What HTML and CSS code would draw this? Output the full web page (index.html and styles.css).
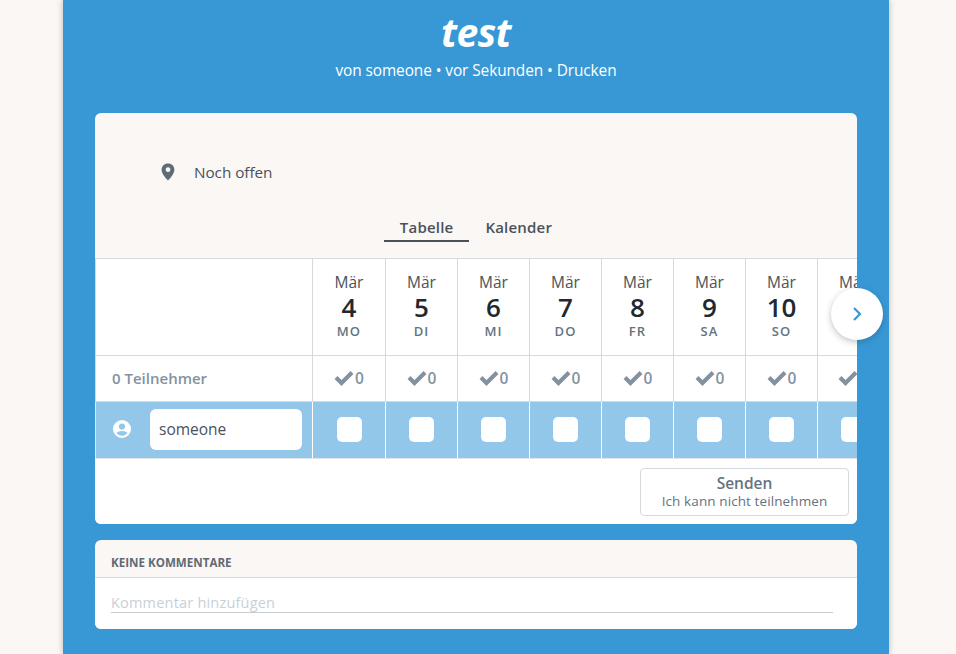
FILE: index.html
```html
<!DOCTYPE html>
<html lang="de">
<head>
<meta charset="utf-8">
<title>test</title>
<link rel="stylesheet" href="styles.css">
</head>
<body>
<main class="sheet">
  <header class="head">
    <h1 class="title">test</h1>
    <p class="meta">von someone • vor Sekunden • Drucken</p>
  </header>
  <section class="card">
    <div class="location">
      <svg class="pin" viewBox="0 0 14 18" width="14" height="18"><path fill="#5f6b76" d="M7 .5C3.300.5.6 3.200.6 6.800c0 3.600 3.600 8 6.400 10.700 2.800-2.700 6.400-7.100 6.400-10.700C13.400 3.200 10.700.5 7 .5zm0 8.600a2.400 2.400 0 1 1 0-4.800 2.400 2.400 0 0 1 0 4.800z"/></svg>
      <span>Noch offen</span>
    </div>
    <nav class="tabs">
      <span class="tab active">Tabelle</span>
      <span class="tab">Kalender</span>
    </nav>
    <div class="poll">
      <div class="row row-head">
        <div class="lead"></div>
        <div class="day"><span class="mon">Mär</span><span class="num">4</span><span class="dow">MO</span></div>
        <div class="day"><span class="mon">Mär</span><span class="num">5</span><span class="dow">DI</span></div>
        <div class="day"><span class="mon">Mär</span><span class="num">6</span><span class="dow">MI</span></div>
        <div class="day"><span class="mon">Mär</span><span class="num">7</span><span class="dow">DO</span></div>
        <div class="day"><span class="mon">Mär</span><span class="num">8</span><span class="dow">FR</span></div>
        <div class="day"><span class="mon">Mär</span><span class="num">9</span><span class="dow">SA</span></div>
        <div class="day"><span class="mon">Mär</span><span class="num">10</span><span class="dow">SO</span></div>
        <div class="day"><span class="mon">Mär</span></div>
      </div>
      <div class="row row-count">
        <div class="lead">0 Teilnehmer</div>
        <div class="tally"><svg class="check" viewBox="0 0 20 16" width="20" height="16"><path d="M2 7.500 7.500 13 18 2.500" fill="none" stroke="#84929f" stroke-width="4.200"/></svg><span>0</span></div>
        <div class="tally"><svg class="check" viewBox="0 0 20 16" width="20" height="16"><path d="M2 7.500 7.500 13 18 2.500" fill="none" stroke="#84929f" stroke-width="4.200"/></svg><span>0</span></div>
        <div class="tally"><svg class="check" viewBox="0 0 20 16" width="20" height="16"><path d="M2 7.500 7.500 13 18 2.500" fill="none" stroke="#84929f" stroke-width="4.200"/></svg><span>0</span></div>
        <div class="tally"><svg class="check" viewBox="0 0 20 16" width="20" height="16"><path d="M2 7.500 7.500 13 18 2.500" fill="none" stroke="#84929f" stroke-width="4.200"/></svg><span>0</span></div>
        <div class="tally"><svg class="check" viewBox="0 0 20 16" width="20" height="16"><path d="M2 7.500 7.500 13 18 2.500" fill="none" stroke="#84929f" stroke-width="4.200"/></svg><span>0</span></div>
        <div class="tally"><svg class="check" viewBox="0 0 20 16" width="20" height="16"><path d="M2 7.500 7.500 13 18 2.500" fill="none" stroke="#84929f" stroke-width="4.200"/></svg><span>0</span></div>
        <div class="tally"><svg class="check" viewBox="0 0 20 16" width="20" height="16"><path d="M2 7.500 7.500 13 18 2.500" fill="none" stroke="#84929f" stroke-width="4.200"/></svg><span>0</span></div>
        <div class="tally tally-cut"><svg class="check" viewBox="0 0 20 16" width="20" height="16"><path d="M2 7.500 7.500 13 18 2.500" fill="none" stroke="#84929f" stroke-width="4.200"/></svg></div>
      </div>
      <div class="row row-entry">
        <div class="lead">
          <svg class="user" viewBox="0 0 18 18" width="18" height="18"><path fill="#fff" fill-rule="evenodd" d="M9 0a9 9 0 1 0 0 18A9 9 0 0 0 9 0zm0 3.400a3.100 3.100 0 1 1 0 6.200 3.100 3.100 0 0 1 0-6.200zM9 15.800c-2.300 0-4.300-1.100-5.500-2.700.9-1.300 3.100-2 5.500-2s4.600.7 5.500 2c-1.200 1.600-3.200 2.700-5.500 2.700z"/></svg>
          <div class="name">someone</div>
        </div>
        <div class="pick"><span class="box"></span></div>
        <div class="pick"><span class="box"></span></div>
        <div class="pick"><span class="box"></span></div>
        <div class="pick"><span class="box"></span></div>
        <div class="pick"><span class="box"></span></div>
        <div class="pick"><span class="box"></span></div>
        <div class="pick"><span class="box"></span></div>
        <div class="pick"><span class="box"></span></div>
      </div>
    </div>
    <div class="actions">
      <button class="send" type="button"><strong>Senden</strong><span>Ich kann nicht teilnehmen</span></button>
    </div>
    <button class="next" type="button" aria-label="Weiter"><svg viewBox="0 0 10 16" width="10" height="16"><path d="M2 2l6 6-6 6" fill="none" stroke="#3898d6" stroke-width="2.200"/></svg></button>
  </section>
  <section class="card comments">
    <h2 class="comments-head">KEINE KOMMENTARE</h2>
    <div class="comments-body"><div class="comment-input">Kommentar hinzufügen</div></div>
  </section>
</main>
</body>
</html>
```
FILE: styles.css
```css
* { box-sizing: border-box; }
html, body { margin: 0; height: 100%; }
body {
  background: #fbf7f4;
  font-family: "Open Sans", "Noto Sans", sans-serif;
  color: #49525c;
  overflow: hidden;
}
.sheet {
  width: 826px;
  height: 654px;
  margin: 0 auto 0 63px;
  padding: 0 32px;
  background: #3898d6;
  box-shadow: 0 0 6px rgba(60, 60, 60, .35);
}
.head { height: 113px; padding-top: 10px; text-align: center; color: #fff; }
.title {
  margin: 0;
  font-size: 39px;
  line-height: 44px;
  font-weight: 700;
  font-style: italic;
  letter-spacing: -.6px;
}
.meta { margin: 5px 0 0; font-size: 15.400px; line-height: 24px; letter-spacing: -.08px; }
.card {
  position: relative;
  background: #fbf7f4;
  border-radius: 6px;
}
.location {
  display: flex;
  align-items: center;
  height: 73px;
  padding: 45px 0 0 66px;
  font-size: 15.300px;
  letter-spacing: -.05px;
  gap: 19px;
}
.tabs { display: flex; justify-content: center; margin-top: 28px; height: 28px; }
.tab {
  padding: 0 16px;
  text-align: center;
  font-size: 15px;
  font-weight: 600;
  line-height: 26px;
  letter-spacing: .2px;
}
.tab.active { border-bottom: 2px solid #49525c; }
.poll {
  margin-top: 16px;
  overflow: hidden;
  background: #fff;
  border-top: 1px solid #d4dade;
}
.row {
  display: grid;
  grid-template-columns: 218px 73px repeat(7, 72px);
}
.row-head { height: 97px; border-bottom: 1px solid #d4dade; }
.row-count { height: 46px; border-bottom: 1px solid #d4dade; }
.row-entry { height: 57px; background: #93c7ea; border-bottom: 1px solid #e0e4e7; }
.lead { border-left: 1px solid #d4dade; border-right: 1px solid #d4dade; }
.day {
  display: flex;
  flex-direction: column;
  align-items: center;
  border-right: 1px solid #d4dade;
  padding-top: 13px;
}
.mon { font-size: 15.500px; line-height: 21px; }
.num { font-size: 26px; line-height: 28px; font-weight: 600; color: #22282e; }
.dow { font-size: 13px; line-height: 20px; font-weight: 600; letter-spacing: 1.100px; color: #657380; }
.row-count .lead {
  display: flex;
  align-items: center;
  padding: 0 0 2px 16px;
  font-size: 15px;
  font-weight: 600;
  color: #84929f;
}
.tally {
  display: flex;
  align-items: center;
  justify-content: center;
  gap: 1px;
  padding-bottom: 2px;
  border-right: 1px solid #d4dade;
  font-size: 15.500px;
  font-weight: 600;
  color: #84929f;
}
.tally-cut { justify-content: flex-start; padding-left: 20px; }
.row-entry .lead {
  display: flex;
  align-items: center;
  border-left-color: #dfe9f0;
  border-right: 1px solid #fff;
  padding: 0 10px 1px 17px;
  gap: 19px;
}
.user { flex: none; margin-bottom: 2px; }
.name {
  flex: 1;
  height: 41px;
  padding-left: 9px;
  background: #fff;
  border-radius: 6px;
  font-size: 15.500px;
  line-height: 40px;
}
.pick {
  display: flex;
  align-items: center;
  justify-content: center;
  padding-bottom: 1px;
  border-right: 1px solid #fff;
}
.box { width: 25px; height: 25px; background: #fff; border-radius: 5px; }
.actions {
  display: flex;
  justify-content: flex-end;
  height: 65px;
  padding: 9px 8px 0 0;
  background: #fff;
  border-radius: 0 0 6px 6px;
}
.send {
  display: flex;
  flex-direction: column;
  align-items: center;
  width: 209px;
  height: 48px;
  padding: 4px 0 0;
  background: #fff;
  border: 1px solid #d4dade;
  border-radius: 4px;
  font-family: inherit;
  color: #657380;
}
.send strong { font-size: 15.500px; line-height: 20px; font-weight: 600; }
.send span { font-size: 13.500px; line-height: 17px; letter-spacing: .1px; }
.next {
  position: absolute;
  left: 736px;
  top: 175px;
  width: 52px;
  height: 52px;
  display: flex;
  align-items: center;
  justify-content: center;
  padding: 0;
  border: 0;
  border-radius: 50%;
  background: #fff;
  box-shadow: 0 2px 6px rgba(40, 50, 60, .3);
}
.comments { margin-top: 16px; overflow: hidden; }
.comments-head {
  margin: 0;
  height: 38px;
  padding: 14px 16px 0;
  border-bottom: 1px solid #d4dade;
  font-size: 11.600px;
  line-height: 17px;
  font-weight: 700;
  color: #5f6b76;
}
.comments-body { height: 51px; padding: 16px 24px 0 16px; background: #fff; }
.comment-input {
  height: 19px;
  border-bottom: 1px solid #c5cdd3;
  font-size: 14.500px;
  line-height: 18px;
  letter-spacing: .2px;
  color: #c7d0d8;
}
```
